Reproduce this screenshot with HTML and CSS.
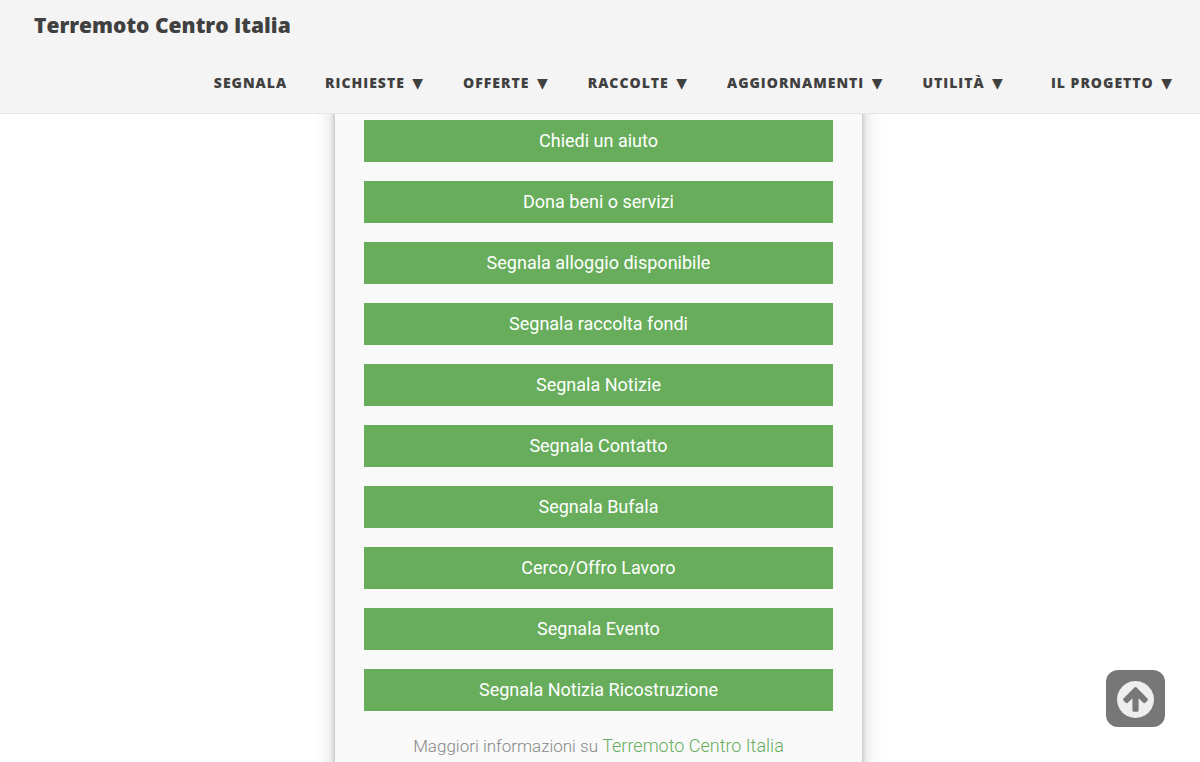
FILE: index.html
```
<!DOCTYPE html>
<html lang="it">

<head>
    <meta charset="utf-8">
    <meta name="viewport" content="width=device-width, initial-scale=1">
    <title>Terremoto Centro Italia</title>
    <link rel="stylesheet" href="styles.css">
</head>

<body>

    <header class="site-header">
        <a class="site-title" href="#">Terremoto Centro Italia</a>
        <nav class="site-nav">
            <a href="#">Segnala</a>
            <a class="dropdown" href="#">Richieste</a>
            <a class="dropdown" href="#">Offerte</a>
            <a class="dropdown" href="#">Raccolte</a>
            <a class="dropdown" href="#">Aggiornamenti</a>
            <a class="dropdown" href="#">Utilità</a>
            <a class="dropdown about" href="#">Il progetto</a>
        </nav>
    </header>

    <main>
        <div class="panel">
            <div class="actions">
                <button type="button">Chiedi un aiuto</button>
                <button type="button">Dona beni o servizi</button>
                <button type="button">Segnala alloggio disponibile</button>
                <button type="button">Segnala raccolta fondi</button>
                <button type="button">Segnala Notizie</button>
                <button type="button">Segnala Contatto</button>
                <button type="button">Segnala Bufala</button>
                <button type="button">Cerco/Offro Lavoro</button>
                <button type="button">Segnala Evento</button>
                <button type="button">Segnala Notizia Ricostruzione</button>
            </div>
            <p class="info">Maggiori informazioni su <a href="#">Terremoto Centro Italia</a></p>
        </div>
    </main>

    <a class="back-to-top" href="#" aria-label="Torna su">
        <svg width="37" height="37" viewBox="0 0 1536 1536">
            <path fill="#eee"
                d="M1284 767q0-27-18-45l-362-362-91-91q-18-18-45-18t-45 18l-91 91-362 362q-18 18-18 45t18 45l91 91q18 18 45 18t45-18l189-189v502q0 26 19 45t45 19h128q26 0 45-19t19-45v-502l189 189q19 19 45 19t45-19l91-91q18-18 18-45zm252 1q0 209-103 385.5t-279.5 279.5-385.5 103-385.5-103-279.5-279.5-103-385.5 103-385.5 279.5-279.5 385.5-103 385.5 103 279.5 279.5 103 385.5z" />
        </svg>
    </a>

</body>

</html>
```

FILE: styles.css
```
* {
    box-sizing: border-box;
}

body {
    margin: 0;
    background: #fff;
    font-family: Roboto, Arial, sans-serif;
}

.site-header {
    padding: 10px 26px 20px 34px;
    background: #f4f4f4;
    border-bottom: 1px solid #e6e6e6;
    font-family: "Open Sans", Arial, sans-serif;
    font-weight: 800;
}

.site-header a {
    color: #404040;
    text-decoration: none;
}

.site-title {
    display: block;
    font-size: 21px;
    line-height: 30px;
}

.site-nav {
    display: flex;
    flex-wrap: wrap;
    justify-content: flex-end;
    gap: 0 38px;
    margin-top: 33px;
    font-size: 14px;
    line-height: 20px;
    letter-spacing: 1px;
    text-transform: uppercase;
}

.site-nav .dropdown::after {
    content: " ▼";
    padding: 0 1px 0 2px;
    font-family: "DejaVu Sans", sans-serif;
    font-weight: 400;
    line-height: 1;
}

.site-nav .about {
    margin-left: 8px;
}

main {
    display: flex;
    justify-content: center;
    padding-right: 3px;
    overflow: hidden;
}

/* the top edge of the panel stays tucked under the header */
.panel {
    width: 44%;
    min-width: 300px;
    margin-top: -24px;
    padding: 30px 29px;
    background: #f9f9f9;
    box-shadow: 0 0 20px rgba(0, 0, 0, 0.2), 0 5px 5px rgba(0, 0, 0, 0.24);
}

.actions {
    display: flex;
    flex-direction: column;
    gap: 19px;
}

.actions button {
    padding: 10px;
    border: 0;
    background: #67ad5b;
    color: #fff;
    font-family: inherit;
    font-size: 18px;
    line-height: 22px;
    cursor: pointer;
}

.actions button:hover {
    background: #43a047;
}

.info {
    margin: 24px 0 0;
    color: #888;
    font-size: 17px;
    font-weight: 300;
    line-height: 22px;
    text-align: center;
}

.info a {
    color: #67ad5b;
    font-size: 18px;
    text-decoration: none;
}

.back-to-top {
    position: fixed;
    right: 35px;
    bottom: 35px;
    display: flex;
    align-items: center;
    justify-content: center;
    width: 59px;
    height: 57px;
    padding-top: 2px;
    border-radius: 12px;
    background: #777;
}
```
